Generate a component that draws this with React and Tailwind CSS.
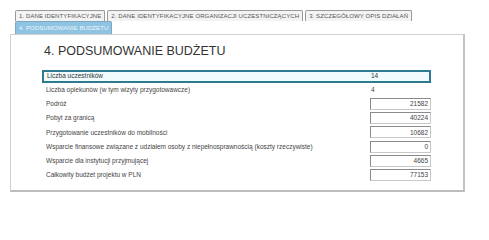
import React from "react";

const rows = [
  { label: "Liczba uczestników", value: "14", kind: "active" },
  { label: "Liczba opiekunów (w tym wizyty przygotowawcze)", value: "4", kind: "plain" },
  { label: "Podróż", value: "21582", kind: "box" },
  { label: "Pobyt za granicą", value: "40224", kind: "box" },
  { label: "Przygotowanie uczestników do mobilności", value: "10682", kind: "box" },
  { label: "Wsparcie finansowe związane z udziałem osoby z niepełnosprawnością (koszty rzeczywiste)", value: "0", kind: "box" },
  { label: "Wsparcie dla instytucji przyjmującej", value: "4665", kind: "box" },
  { label: "Całkowity budżet projektu w PLN", value: "77153", kind: "box" },
];

function Tab({ children, active }) {
  return (
    <div
      className={
        active
          ? "h-[13px] px-[3px] flex items-center border border-[#7aa9c4] border-b-0 rounded-t-[2px] bg-[#8fc3e2] text-[#eef7fc] text-[6px] leading-none tracking-[0.1px]"
          : "h-[11px] px-[3px] flex items-center border border-[#9a9a9a] border-b-0 rounded-t-[2px] bg-[#f3f3f3] text-[#555] text-[6px] leading-none tracking-[0.1px]"
      }
    >
      {children}
    </div>
  );
}

function Row({ label, value, kind }) {
  if (kind === "active") {
    return (
      <div className="h-[14.1px] flex items-center">
        <div className="h-[13px] w-[389px] flex items-center border-2 border-[#2e7a92] bg-[#f1fbfd] text-[#333]">
          <div className="w-[326px] pl-[3px] text-[6.5px]">{label}</div>
          <div className="pl-[1px] text-[6.5px]">{value}</div>
        </div>
      </div>
    );
  }
  return (
    <div className="h-[14.1px] flex items-center text-[#444]">
      <div className="w-[328px] pl-[4px] text-[6.5px] whitespace-nowrap">{label}</div>
      {kind === "plain" ? (
        <div className="pl-[1px] text-[6.5px]">{value}</div>
      ) : (
        <div className="h-[12px] w-[61px] flex items-center justify-end pr-[2px] bg-white border border-[#c8c8c8] border-t-[#8a8a8a] border-l-[#8a8a8a] text-[6.5px]">
          {value}
        </div>
      )}
    </div>
  );
}

export default function App() {
  return (
    <div
      className="w-[489px] h-[202px] bg-white pt-[10px] pl-[10px]"
      style={{ fontFamily: '"Liberation Sans", Arial, sans-serif' }}
    >
      <div className="pl-[5px] flex flex-col">
        <div className="flex gap-[2px] items-end">
          <Tab>1. DANE IDENTYFIKACYJNE</Tab>
          <Tab>2. DANE IDENTYFIKACYJNE ORGANIZACJI UCZESTNICZĄCYCH</Tab>
          <Tab>3. SZCZEGÓŁOWY OPIS DZIAŁAŃ</Tab>
        </div>
        <div className="flex">
          <Tab active>4. PODSUMOWANIE BUDŻETU</Tab>
        </div>
      </div>
      <div className="w-[455px] h-[158px] border border-[#cfcfcf] border-r-2 border-r-[#c4c4c4] border-b-2 border-b-[#bdbdbd] pl-[31px] pt-[9px]">
        <div className="text-[12.5px] leading-[15px] text-[#333] pl-[2px]">4. PODSUMOWANIE BUDŻETU</div>
        <div className="mt-[10px] flex flex-col">
          {rows.map((r) => (
            <Row key={r.label} {...r} />
          ))}
        </div>
      </div>
    </div>
  );
}
